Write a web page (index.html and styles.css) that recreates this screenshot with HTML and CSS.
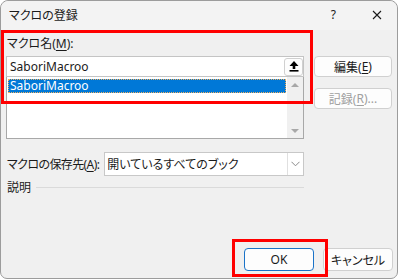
FILE: index.html
```html
<!DOCTYPE html>
<html lang="ja">
<head>
	<meta charset="UTF-8">
	<title>マクロの登録</title>
	<link rel="stylesheet" href="styles.css">
</head>
<body>
	<div class="dlg">
		<div class="title">
			<span class="title-text">マクロの登録</span>
			<span class="help">?</span>
			<svg class="close" width="10" height="10" viewBox="0 0 10 10"><path d="M1 1L9 9M9 1L1 9" stroke="#1a1a1a" stroke-width="1.1"/></svg>
		</div>
		<div class="main">
			<div class="left">
				<div class="lbl">マクロ名(<u>M</u>):</div>
				<div class="name">
					<span class="val">SaboriMacroo</span>
					<span class="pick">
						<svg width="10" height="11" viewBox="0 0 10 11"><path d="M5 0L9.5 5H6.3V8H3.7V5H0.5Z" fill="#000"/><rect x="0.5" y="9" width="9" height="1.6" fill="#000"/></svg>
					</span>
				</div>
				<div class="list">
					<div class="items">
						<div class="item sel">SaboriMacroo</div>
					</div>
					<div class="sbar">
						<span class="up"></span>
						<span class="down"></span>
					</div>
				</div>
				<div class="row">
					<span class="lbl2">マクロの保存先(<u>A</u>):</span>
					<div class="combo">
						<span class="cval">開いているすべてのブック</span>
						<span class="arr">
							<svg width="9" height="6" viewBox="0 0 9 6"><path d="M0.5 0.8L4.5 4.8L8.5 0.8" fill="none" stroke="#8a8a8a" stroke-width="1"/></svg>
						</span>
					</div>
				</div>
				<div class="desc">
					<span>説明</span>
					<span class="line"></span>
				</div>
			</div>
			<div class="right">
				<div class="btn">編集(<u>E</u>)</div>
				<div class="btn off">記録(<u>R</u>)...</div>
			</div>
		</div>
		<div class="foot">
			<div class="btn ok">OK</div>
			<div class="btn cancel">キャンセル</div>
		</div>
		<!-- 赤枠（注釈） -->
		<div class="mark mark1"></div>
		<div class="mark mark2"></div>
	</div>
</body>
</html>
```
FILE: styles.css
```css
*{
	margin: 0;
	padding: 0;
}
body{
	background: #fff;
	font-family: "Noto Sans", "Noto Sans CJK JP", sans-serif;
	font-size: 12px;
	color: #1a1a1a;
	font-feature-settings: "palt";
}
u{
	text-decoration: underline;
	text-underline-offset: 2px;
}
.dlg{
	width: 398px;
	height: 279px;
	box-sizing: border-box;
	border: 1px solid #9c9c9c;
	border-radius: 8px 8px 7px 7px;
	background: #f0f0f0;
	display: flex;
	flex-direction: column;
	position: relative;
}
.title{
	height: 29px;
	display: flex;
	align-items: center;
	padding-left: 8px;
	background: #f3f3f3;
	border-radius: 8px 8px 0 0;
}
.title-text{
	flex: 1;
	margin-top: -2px;
}
.help{
	font-size: 12px;
	margin-right: 36px;
	margin-top: -2px;
}
.close{
	margin-right: 15px;
	margin-top: -2px;
}
.main{
	display: flex;
	gap: 10px;
	padding: 0 5px;
}
.left{
	width: 298px;
}
.lbl{
	margin-top: 6px;
	line-height: 16px;
	height: 20px;
	padding-left: 1px;
}
.name{
	height: 21px;
	box-sizing: border-box;
	border: 1px solid #c4c4c4;
	background: #fff;
	display: flex;
	align-items: center;
	padding-left: 3px;
}
.val{
	flex: 1;
}
.pick{
	width: 19px;
	height: 18px;
	box-sizing: border-box;
	border: 1px solid #d0d0d0;
	border-radius: 3px;
	background: #fdfdfd;
	display: flex;
	align-items: center;
	justify-content: center;
}
.list{
	height: 62px;
	box-sizing: border-box;
	border: 1px solid #a8a8a8;
	border-top: none;
	background: #fff;
	display: flex;
}
.items{
	flex: 1;
	padding: 2px 1px 0 1px;
}
.item{
	height: 14px;
	line-height: 14px;
	padding-left: 2px;
}
.sel{
	background: #0078d7;
	color: #fff;
	outline: 1px dotted #f0b060;
	outline-offset: -1px;
}
.sbar{
	width: 16px;
	background: #f0f0f0;
	display: flex;
	flex-direction: column;
	justify-content: space-between;
	align-items: center;
	padding: 6px 0 5px;
}
.up,.down{
	width: 0;
	height: 0;
	border-left: 4px solid transparent;
	border-right: 4px solid transparent;
}
.up{
	border-bottom: 4px solid #a8a8a8;
}
.down{
	border-top: 4px solid #a8a8a8;
}
.row{
	display: flex;
	align-items: center;
	gap: 5px;
	margin-top: 13px;
	padding-left: 1px;
}
.lbl2{
	white-space: nowrap;
	letter-spacing: -0.6px;
}
.combo{
	flex: 1;
	height: 24px;
	box-sizing: border-box;
	border: 1px solid #c8c8c8;
	background: #fff;
	display: flex;
	align-items: center;
	padding-left: 2px;
}
.cval{
	flex: 1;
}
.arr{
	width: 16px;
	height: 22px;
	box-sizing: border-box;
	border-left: 1px solid #e0e0e0;
	display: flex;
	align-items: center;
	justify-content: center;
}
.desc{
	display: flex;
	align-items: center;
	gap: 5px;
	margin-top: 4px;
	padding-left: 1px;
	height: 14px;
}
.line{
	flex: 1;
	height: 1px;
	background: #dadada;
}
.right{
	width: 78px;
	padding-top: 26px;
	display: flex;
	flex-direction: column;
	gap: 11px;
}
.btn{
	height: 21px;
	box-sizing: border-box;
	border: 1px solid #d0d0d0;
	border-radius: 4px;
	background: #fdfdfd;
	display: flex;
	align-items: center;
	justify-content: center;
}
.off{
	color: #a0a0a0;
}
.foot{
	margin-top: auto;
	display: flex;
	justify-content: flex-end;
	gap: 9px;
	padding: 0 4px 7px 0;
}
.foot .btn{
	width: 70px;
	height: 23px;
}
.ok{
	border-color: #1a73c8;
}
.mark{
	position: absolute;
	border: 3px solid #f00;
}
.mark1{
	left: 0;
	top: 29px;
	width: 306px;
	height: 68px;
}
.mark2{
	left: 231px;
	top: 238px;
	width: 90px;
	height: 32px;
}
```
